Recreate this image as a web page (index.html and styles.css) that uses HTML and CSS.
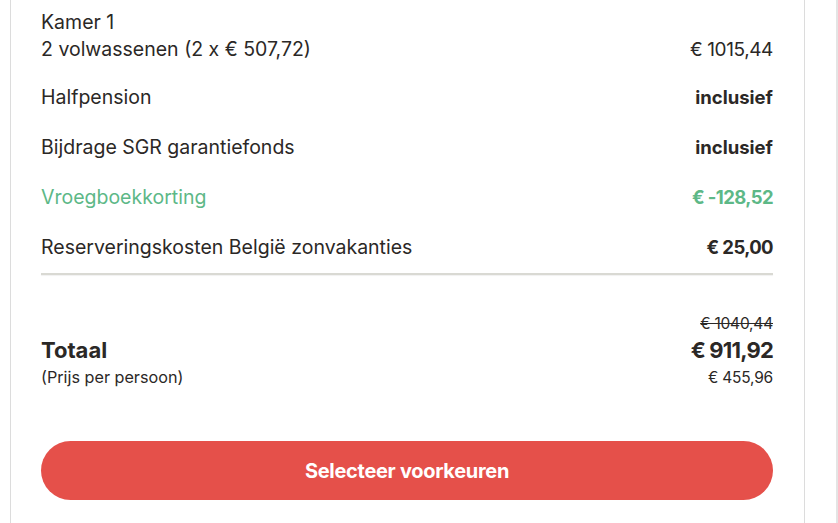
FILE: index.html
```html
<!DOCTYPE html>
<html lang="nl">
<head>
<meta charset="utf-8">
<link rel="stylesheet" href="styles.css">
</head>
<body>
<div class="page">
  <div class="card">
    <div class="room">
      <div class="room-title">Kamer 1</div>
      <div class="row">
        <span>2 volwassenen (2 x € 507,72)</span>
        <span class="num">€ 1015,44</span>
      </div>
    </div>
    <div class="row item">
      <span>Halfpension</span>
      <span class="strong">inclusief</span>
    </div>
    <div class="row item">
      <span>Bijdrage SGR garantiefonds</span>
      <span class="strong">inclusief</span>
    </div>
    <div class="row item discount">
      <span>Vroegboekkorting</span>
      <span class="strong num">€ -128,52</span>
    </div>
    <div class="row item">
      <span>Reserveringskosten België zonvakanties</span>
      <span class="strong num">€ 25,00</span>
    </div>
    <div class="divider"></div>
    <div class="total">
      <div class="total-left">
        <div class="total-label">Totaal</div>
        <div class="small">(Prijs per persoon)</div>
      </div>
      <div class="total-right">
        <div class="small old">€ 1040,44</div>
        <div class="total-price">€ 911,92</div>
        <div class="small">€ 455,96</div>
      </div>
    </div>
    <button class="cta">Selecteer voorkeuren</button>
  </div>
  <div class="edge"></div>
</div>
</body>
</html>
```

FILE: styles.css
```css
html, body {
  margin: 0;
  padding: 0;
  background: #ffffff;
}
body {
  font-family: Inter, "Noto Sans", sans-serif;
  color: #2b2826;
  width: 838px;
  height: 523px;
  overflow: hidden;
}
.page {
  display: flex;
  height: 523px;
}
.card {
  margin-left: 10px;
  width: 732px;
  padding: 9px 31px 0 30px;
  border-left: 1px solid #dcdcdc;
  border-right: 1px solid #dcdcdc;
  display: flex;
  flex-direction: column;
}
.edge {
  margin-left: 31px;
  width: 2px;
  background: #e4e4e4;
}
.room-title {
  font-size: 19.5px;
  line-height: 27px;
}
.row {
  display: flex;
  justify-content: space-between;
  align-items: center;
  font-size: 19.5px;
  line-height: 27px;
}
.num {
  font-size: 19px;
  letter-spacing: -0.4px;
}
.item {
  margin-top: 23px;
}
.room + .item {
  margin-top: 21px;
}
.strong {
  font-weight: 700;
  font-size: 18.5px;
}
.strong.num {
  font-size: 18.5px;
  letter-spacing: -0.6px;
}
.discount {
  color: #5db887;
}
.divider {
  margin-top: 12px;
  height: 2px;
  background: #d9d9d3;
  box-shadow: 0 1px 1px rgba(0,0,0,0.06);
}
.total {
  margin-top: 35px;
  display: flex;
  justify-content: space-between;
  align-items: flex-end;
}
.total-left {
  display: flex;
  flex-direction: column;
}
.total-label {
  font-size: 22px;
  font-weight: 700;
  line-height: 27px;
}
.total-right {
  display: flex;
  flex-direction: column;
  align-items: flex-end;
}
.small {
  font-size: 16.2px;
  line-height: 27px;
}
.total-right .small {
  font-size: 15.5px;
  letter-spacing: -0.2px;
}
.old {
  text-decoration: line-through;
}
.total-price {
  font-size: 22px;
  font-weight: 700;
  line-height: 27px;
  letter-spacing: -0.8px;
}
.cta {
  margin-top: 50px;
  height: 59px;
  border: none;
  border-radius: 30px;
  background: #e5504a;
  color: #ffffff;
  font-family: Inter, sans-serif;
  font-weight: 700;
  font-size: 20px;
  letter-spacing: -0.3px;
  cursor: pointer;
}
```
